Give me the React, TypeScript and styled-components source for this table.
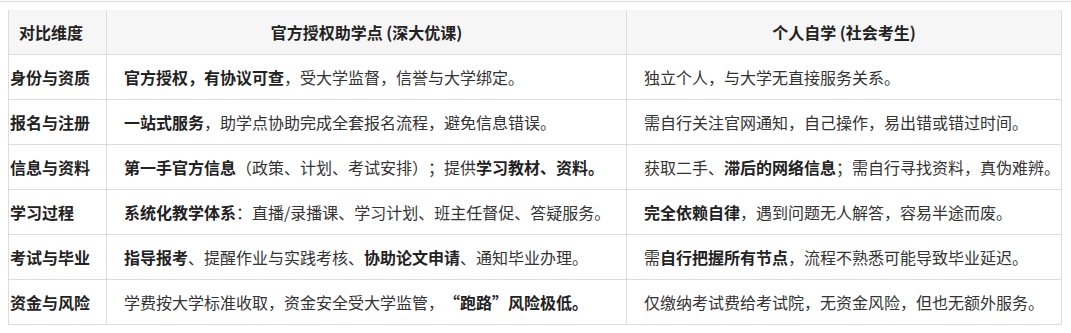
import React from "react"
import styled, { createGlobalStyle } from "styled-components"

const GlobalStyle = createGlobalStyle`
  html, body {
    margin: 0;
    padding: 0;
    background: #ffffff;
  }
  body {
    font-family: "Noto Sans CJK SC", "Noto Sans", "Liberation Sans", sans-serif;
    color: #333333;
    text-spacing-trim: space-all;
  }
`

const Page = styled.div`
  padding: 1px 0 0 0;
`

const TopRule = styled.div`
  height: 1px;
  background: #dcdcdc;
  margin-bottom: 8px;
`

const Table = styled.table`
  margin-left: 8px;
  width: 1053px;
  border-collapse: collapse;
  table-layout: fixed;
  font-size: 16px;
`

const HeadCell = styled.th<{ $first?: boolean }>`
  height: 44px;
  padding: 0;
  padding-left: ${(p) => (p.$first ? "10px" : "0")};
  background: #f6f6f6;
  border: 1px solid #dddddd;
  border-top: none;
  font-weight: 700;
  color: #222222;
  text-align: ${(p) => (p.$first ? "left" : "center")};
  vertical-align: middle;
  white-space: nowrap;
  line-height: 20px;
`

const Cell = styled.td<{ $first?: boolean }>`
  height: 44px;
  padding: 0 0 0 ${(p) => (p.$first ? "1px" : "17px")};
  border: 1px solid #dddddd;
  vertical-align: middle;
  white-space: nowrap;
  line-height: 20px;
  text-spacing-trim: space-all;
  font-weight: ${(p) => (p.$first ? 700 : 400)};
  color: ${(p) => (p.$first ? "#222222" : "#333333")};
`

const Strong = styled.b`
  font-weight: 700;
  color: #222222;
`

type Row = { dim: string; official: React.ReactNode; self: React.ReactNode }

const rows: Row[] = [
  {
    dim: "身份与资质",
    official: (
      <>
        <Strong>官方授权，有协议可查</Strong>，受大学监督，信誉与大学绑定。
      </>
    ),
    self: <>独立个人，与大学无直接服务关系。</>,
  },
  {
    dim: "报名与注册",
    official: (
      <>
        <Strong>一站式服务</Strong>，助学点协助完成全套报名流程，避免信息错误。
      </>
    ),
    self: <>需自行关注官网通知，自己操作，易出错或错过时间。</>,
  },
  {
    dim: "信息与资料",
    official: (
      <>
        <Strong>第一手官方信息</Strong>（政策、计划、考试安排）；提供<Strong>学习教材、资料。</Strong>
      </>
    ),
    self: (
      <>
        获取二手、<Strong>滞后的网络信息</Strong>；需自行寻找资料，真伪难辨。
      </>
    ),
  },
  {
    dim: "学习过程",
    official: (
      <>
        <Strong>系统化教学体系</Strong>：直播/录播课、学习计划、班主任督促、答疑服务。
      </>
    ),
    self: (
      <>
        <Strong>完全依赖自律</Strong>，遇到问题无人解答，容易半途而废。
      </>
    ),
  },
  {
    dim: "考试与毕业",
    official: (
      <>
        <Strong>指导报考</Strong>、提醒作业与实践考核、<Strong>协助论文申请</Strong>、通知毕业办理。
      </>
    ),
    self: (
      <>
        需<Strong>自行把握所有节点</Strong>，流程不熟悉可能导致毕业延迟。
      </>
    ),
  },
  {
    dim: "资金与风险",
    official: (
      <>
        学费按大学标准收取，资金安全受大学监管，<Strong>“跑路”风险极低。</Strong>
      </>
    ),
    self: <>仅缴纳考试费给考试院，无资金风险，但也无额外服务。</>,
  },
]

export default function App() {
  return (
    <Page>
      <GlobalStyle />
      <TopRule />
      <Table>
        <colgroup>
          <col style={{ width: 98 }} />
          <col style={{ width: 520 }} />
          <col style={{ width: 435 }} />
        </colgroup>
        <thead>
          <tr>
            <HeadCell $first>对比维度</HeadCell>
            <HeadCell>官方授权助学点 (深大优课)</HeadCell>
            <HeadCell>个人自学 (社会考生)</HeadCell>
          </tr>
        </thead>
        <tbody>
          {rows.map((r) => (
            <tr key={r.dim}>
              <Cell $first>{r.dim}</Cell>
              <Cell>{r.official}</Cell>
              <Cell>{r.self}</Cell>
            </tr>
          ))}
        </tbody>
      </Table>
    </Page>
  )
}
